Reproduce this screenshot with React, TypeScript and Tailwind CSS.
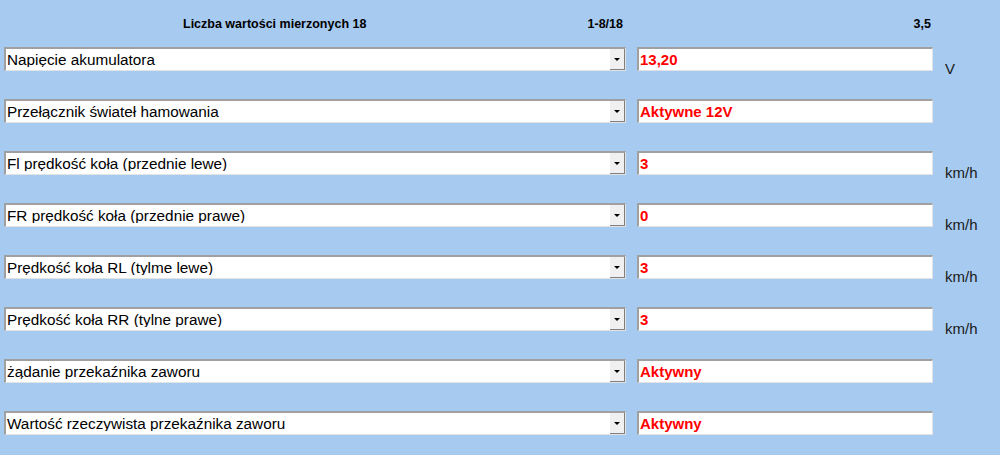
const rows = [
  { label: "Napięcie akumulatora", value: "13,20", unit: "V" },
  { label: "Przełącznik świateł hamowania", value: "Aktywne 12V", unit: "" },
  { label: "Fl prędkość koła (przednie lewe)", value: "3", unit: "km/h" },
  { label: "FR prędkość koła (przednie prawe)", value: "0", unit: "km/h" },
  { label: "Prędkość koła RL (tylme lewe)", value: "3", unit: "km/h" },
  { label: "Prędkość koła RR (tylne prawe)", value: "3", unit: "km/h" },
  { label: "żądanie przekaźnika zaworu", value: "Aktywny", unit: "" },
  { label: "Wartość rzeczywista przekaźnika zaworu", value: "Aktywny", unit: "" },
];

function DropButton() {
  return (
    <div className="flex h-[21px] w-[15px] items-center justify-center border-b border-r border-b-[#808080] border-r-[#808080] bg-[#f0f0f0]">
      <div className="h-0 w-0 border-x-[3px] border-t-[3px] border-x-transparent border-t-black" />
    </div>
  );
}

export default function App() {
  return (
    <div
      className="h-[455px] w-[1000px] overflow-hidden bg-[#a6caf0] pl-[4px] pt-[18px]"
      style={{ fontFamily: '"Liberation Sans", Arial, sans-serif' }}
    >
      <div className="grid grid-cols-[622px_296px_60px] gap-x-[11px]">
        <div className="flex h-[12px] items-center justify-between pl-[179px] pr-[3px] text-[12.5px] font-bold leading-none text-black">
          <span>Liczba wartości mierzonych 18</span>
          <span>1-8/18</span>
        </div>
        <div className="flex h-[12px] items-center justify-end pr-[2px] text-[12.5px] font-bold leading-none text-black">
          3,5
        </div>
        <div />
      </div>

      <div className="mt-[17px] grid grid-cols-[622px_296px_60px] grid-rows-[repeat(8,24px)] gap-x-[11px] gap-y-[28px]">
        {rows.map((row) => (
          <div key={row.label} className="contents">
            <div className="flex h-[24px] items-center border-l-[2px] border-t-[2px] border-b border-r border-l-[#a0a0a0] border-t-[#a0a0a0] border-b-[#e3e3e3] border-r-[#e3e3e3] bg-white">
              <span className="flex-1 truncate pl-[1px] text-[15.3px] leading-none text-black">
                {row.label}
              </span>
              <DropButton />
            </div>
            <div className="flex h-[24px] items-center border-l-[2px] border-t-[2px] border-b border-r border-l-[#a0a0a0] border-t-[#a0a0a0] border-b-[#e3e3e3] border-r-[#e3e3e3] bg-white pl-[1px] text-[15px] font-bold leading-none text-[#ff0000]">
              {row.value}
            </div>
            <div className="h-[24px] overflow-visible whitespace-nowrap pl-[1px] pt-[14px] text-[15px] leading-none text-[#1a1a1a]">
              {row.unit}
            </div>
          </div>
        ))}
      </div>
    </div>
  );
}
